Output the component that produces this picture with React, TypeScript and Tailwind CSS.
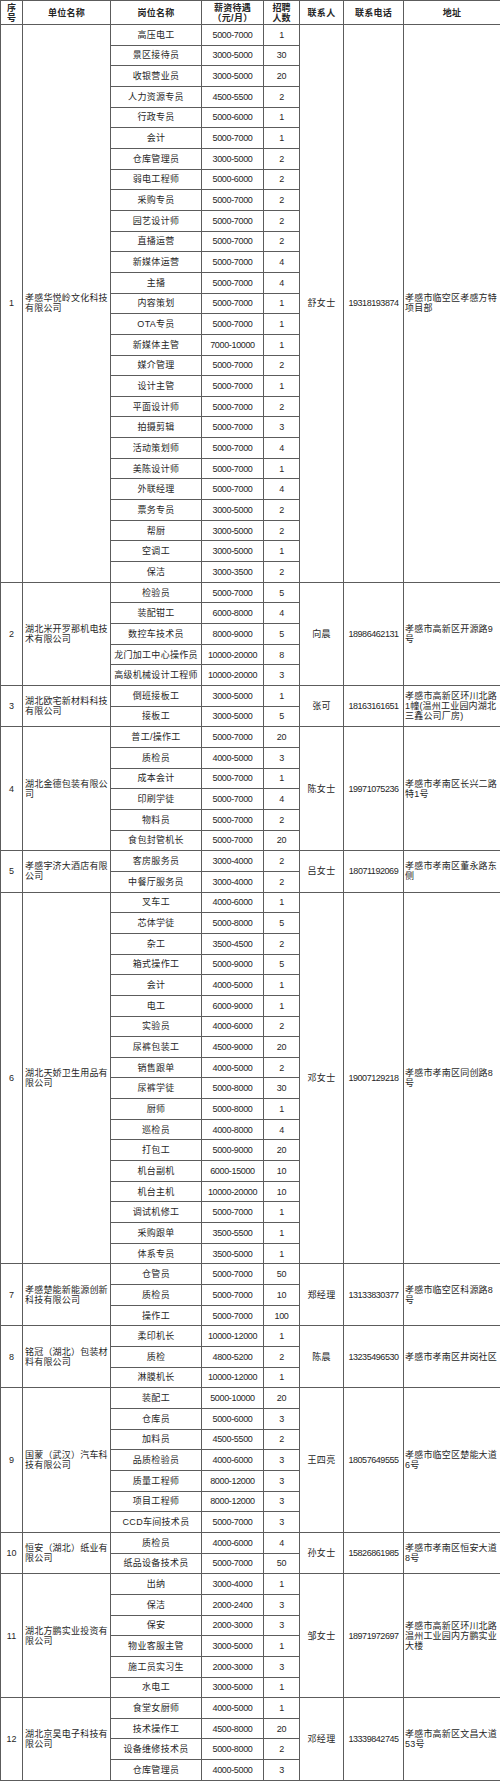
import React from "react";

type Job = [string, string, string];
type Company = {
  no: string;
  name: string[];
  contact: string;
  phone: string;
  addr: string[];
  jobs: Job[];
};

const companies: Company[] = [
  {
    no: "1",
    name: ["孝感华悦岭文化科技", "有限公司"],
    contact: "舒女士",
    phone: "19318193874",
    addr: ["孝感市临空区孝感方特", "项目部"],
    jobs: [
      ["高压电工", "5000-7000", "1"],
      ["景区接待员", "3000-5000", "30"],
      ["收银营业员", "3000-5000", "20"],
      ["人力资源专员", "4500-5500", "2"],
      ["行政专员", "5000-6000", "1"],
      ["会计", "5000-7000", "1"],
      ["仓库管理员", "3000-5000", "2"],
      ["弱电工程师", "5000-6000", "2"],
      ["采购专员", "5000-7000", "2"],
      ["园艺设计师", "5000-7000", "2"],
      ["直播运营", "5000-7000", "2"],
      ["新媒体运营", "5000-7000", "4"],
      ["主播", "5000-7000", "4"],
      ["内容策划", "5000-7000", "1"],
      ["OTA专员", "5000-7000", "1"],
      ["新媒体主管", "7000-10000", "1"],
      ["媒介管理", "5000-7000", "2"],
      ["设计主管", "5000-7000", "1"],
      ["平面设计师", "5000-7000", "2"],
      ["拍摄剪辑", "5000-7000", "3"],
      ["活动策划师", "5000-7000", "4"],
      ["美陈设计师", "5000-7000", "1"],
      ["外联经理", "5000-7000", "4"],
      ["票务专员", "3000-5000", "2"],
      ["帮厨", "3000-5000", "2"],
      ["空调工", "3000-5000", "1"],
      ["保洁", "3000-3500", "2"],
    ],
  },
  {
    no: "2",
    name: ["湖北米开罗那机电技", "术有限公司"],
    contact: "向晨",
    phone: "18986462131",
    addr: ["孝感市高新区开源路9", "号"],
    jobs: [
      ["检验员", "5000-7000", "5"],
      ["装配钳工", "6000-8000", "4"],
      ["数控车技术员", "8000-9000", "5"],
      ["龙门加工中心操作员", "10000-20000", "8"],
      ["高级机械设计工程师", "10000-20000", "3"],
    ],
  },
  {
    no: "3",
    name: ["湖北欧宅新材料科技", "有限公司"],
    contact: "张可",
    phone: "18163161651",
    addr: ["孝感市高新区环川北路", "1幢(温州工业园内湖北", "三鑫公司厂房)"],
    jobs: [
      ["倒班接板工", "3000-5000", "1"],
      ["接板工", "3000-5000", "5"],
    ],
  },
  {
    no: "4",
    name: ["湖北金德包装有限公", "司"],
    contact: "陈女士",
    phone: "19971075236",
    addr: ["孝感市孝南区长兴二路", "特1号"],
    jobs: [
      ["普工/操作工", "5000-7000", "20"],
      ["质检员", "4000-5000", "3"],
      ["成本会计", "5000-7000", "1"],
      ["印刷学徒", "5000-7000", "4"],
      ["物料员", "5000-7000", "2"],
      ["食包封管机长", "5000-7000", "20"],
    ],
  },
  {
    no: "5",
    name: ["孝感宇济大酒店有限", "公司"],
    contact: "吕女士",
    phone: "18071192069",
    addr: ["孝感市孝南区董永路东", "侧"],
    jobs: [
      ["客房服务员", "3000-4000", "2"],
      ["中餐厅服务员", "3000-4000", "2"],
    ],
  },
  {
    no: "6",
    name: ["湖北天娇卫生用品有", "限公司"],
    contact: "邓女士",
    phone: "19007129218",
    addr: ["孝感市孝南区同创路8", "号"],
    jobs: [
      ["叉车工", "4000-6000", "1"],
      ["芯体学徒", "5000-8000", "5"],
      ["杂工", "3500-4500", "2"],
      ["箱式操作工", "5000-9000", "5"],
      ["会计", "4000-5000", "1"],
      ["电工", "6000-9000", "1"],
      ["实验员", "4000-6000", "2"],
      ["尿裤包装工", "4500-9000", "20"],
      ["销售跟单", "4000-5000", "2"],
      ["尿裤学徒", "5000-8000", "30"],
      ["厨师", "5000-8000", "1"],
      ["巡检员", "4000-8000", "4"],
      ["打包工", "5000-9000", "20"],
      ["机台副机", "6000-15000", "10"],
      ["机台主机", "10000-20000", "10"],
      ["调试机修工", "5000-7000", "1"],
      ["采购跟单", "3500-5500", "1"],
      ["体系专员", "3500-5000", "1"],
    ],
  },
  {
    no: "7",
    name: ["孝感楚能新能源创新", "科技有限公司"],
    contact: "郑经理",
    phone: "13133830377",
    addr: ["孝感市临空区科源路8", "号"],
    jobs: [
      ["仓管员", "5000-7000", "50"],
      ["质检员", "5000-7000", "10"],
      ["操作工", "5000-7000", "100"],
    ],
  },
  {
    no: "8",
    name: ["铭冠（湖北）包装材", "料有限公司"],
    contact: "陈晨",
    phone: "13235496530",
    addr: ["孝感市孝南区井岗社区"],
    jobs: [
      ["柔印机长", "10000-12000", "1"],
      ["质检", "4800-5200", "2"],
      ["淋膜机长", "10000-12000", "1"],
    ],
  },
  {
    no: "9",
    name: ["国蒙（武汉）汽车科", "技有限公司"],
    contact: "王四亮",
    phone: "18057649555",
    addr: ["孝感市临空区楚能大道", "6号"],
    jobs: [
      ["装配工", "5000-10000", "20"],
      ["仓库员", "5000-6000", "3"],
      ["加料员", "4500-5500", "2"],
      ["品质检验员", "4000-6000", "3"],
      ["质量工程师", "8000-12000", "3"],
      ["项目工程师", "8000-12000", "3"],
      ["CCD车间技术员", "5000-7000", "3"],
    ],
  },
  {
    no: "10",
    name: ["恒安（湖北）纸业有", "限公司"],
    contact: "孙女士",
    phone: "15826861985",
    addr: ["孝感市孝南区恒安大道", "8号"],
    jobs: [
      ["质检员", "4000-6000", "4"],
      ["纸品设备技术员", "5000-7000", "50"],
    ],
  },
  {
    no: "11",
    name: ["湖北方鹏实业投资有", "限公司"],
    contact: "邹女士",
    phone: "18971972697",
    addr: ["孝感市高新区环川北路", "温州工业园内方鹏实业", "大楼"],
    jobs: [
      ["出纳", "3000-4000", "1"],
      ["保洁", "2000-2400", "3"],
      ["保安", "2000-3000", "3"],
      ["物业客服主管", "3000-5000", "1"],
      ["施工员实习生", "2000-3000", "3"],
      ["水电工", "3000-5000", "1"],
    ],
  },
  {
    no: "12",
    name: ["湖北京昊电子科技有", "限公司"],
    contact: "邓经理",
    phone: "13339842745",
    addr: ["孝感市高新区文昌大道", "53号"],
    jobs: [
      ["食堂女厨师", "4000-5000", "1"],
      ["技术操作工", "4500-8000", "20"],
      ["设备维修技术员", "5000-8000", "2"],
      ["仓库管理员", "4000-5000", "3"],
    ],
  },
];

const cell = "border border-[#5c5c5c] p-0 align-middle";

export default function App() {
  return (
    <div className="w-[500px] bg-white text-[#262626] [font-family:'Liberation_Sans','Noto_Sans_CJK_SC',sans-serif]">
      <table className="w-[500px] table-fixed border-collapse text-[9px] leading-[10px]">
        <colgroup>
          <col className="w-[22px]" />
          <col className="w-[88px]" />
          <col className="w-[91px]" />
          <col className="w-[62px]" />
          <col className="w-[36px]" />
          <col className="w-[44px]" />
          <col className="w-[60px]" />
          <col className="w-[97px]" />
        </colgroup>
        <thead>
          <tr className="h-[24px]">
            <th className={`${cell} text-center font-semibold`}>
              <span className="block">序</span>
              <span className="block">号</span>
            </th>
            <th className={`${cell} text-center font-semibold tracking-[0.3px]`}>单位名称</th>
            <th className={`${cell} text-center font-semibold tracking-[0.3px]`}>岗位名称</th>
            <th className={`${cell} whitespace-nowrap text-center font-semibold tracking-[0.3px]`}>
              <span className="block">薪资待遇</span>
              <span className="block">（元/月）</span>
            </th>
            <th className={`${cell} text-center font-semibold`}>
              <span className="block">招聘</span>
              <span className="block">人数</span>
            </th>
            <th className={`${cell} text-center font-semibold tracking-[0.3px]`}>联系人</th>
            <th className={`${cell} text-center font-semibold tracking-[0.3px]`}>联系电话</th>
            <th className={`${cell} text-center font-semibold tracking-[0.3px]`}>地址</th>
          </tr>
        </thead>
        <tbody>
          {companies.map((c) =>
            c.jobs.map((j, i) => (
              <tr key={`${c.no}-${i}`} className="h-[20.67px]">
                {i === 0 && (
                  <>
                    <td rowSpan={c.jobs.length} className={`${cell} text-center`}>
                      {c.no}
                    </td>
                    <td
                      rowSpan={c.jobs.length}
                      className={`${cell} whitespace-nowrap pl-[2px] text-left tracking-[0.2px]`}
                    >
                      {c.name.map((l) => (
                        <span key={l} className="block">
                          {l}
                        </span>
                      ))}
                    </td>
                  </>
                )}
                <td className={`${cell} whitespace-nowrap text-center tracking-[0.3px]`}>{j[0]}</td>
                <td className={`${cell} whitespace-nowrap text-center tracking-[-0.35px]`}>{j[1]}</td>
                <td className={`${cell} text-center tracking-[-0.3px]`}>{j[2]}</td>
                {i === 0 && (
                  <>
                    <td rowSpan={c.jobs.length} className={`${cell} text-center tracking-[0.3px]`}>
                      {c.contact}
                    </td>
                    <td
                      rowSpan={c.jobs.length}
                      className={`${cell} whitespace-nowrap text-center tracking-[-0.45px]`}
                    >
                      {c.phone}
                    </td>
                    <td
                      rowSpan={c.jobs.length}
                      className={`${cell} whitespace-nowrap pl-[1px] text-left tracking-[0.2px]`}
                    >
                      {c.addr.map((l) => (
                        <span key={l} className="block">
                          {l}
                        </span>
                      ))}
                    </td>
                  </>
                )}
              </tr>
            ))
          )}
        </tbody>
      </table>
    </div>
  );
}
